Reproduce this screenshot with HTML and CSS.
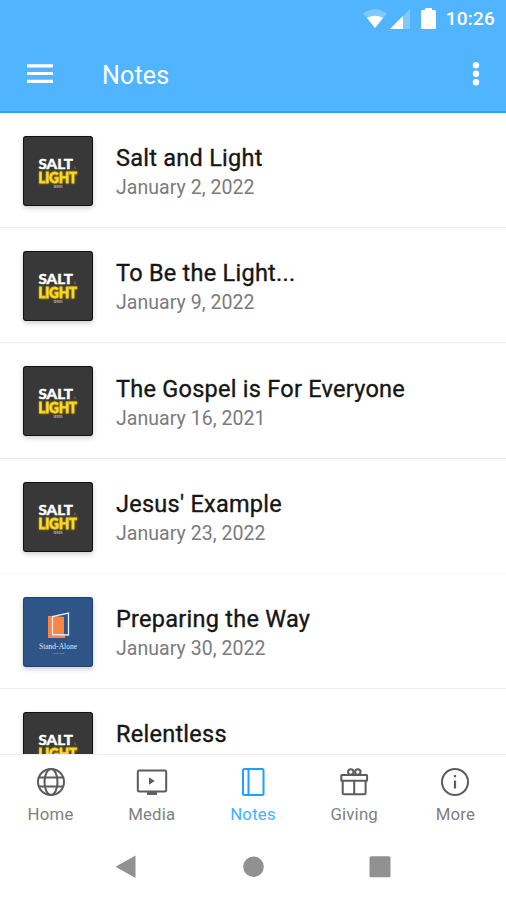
FILE: index.html
```
<!DOCTYPE html>
<html lang="en">
<head>
<meta charset="utf-8">
<title>Notes</title>
<link rel="stylesheet" href="styles.css">
</head>
<body>
<svg width="0" height="0" class="defs">
  <symbol id="salt" viewBox="0 0 70 70">
    <rect width="70" height="70" fill="#383838"/>
    <rect x=".5" y=".5" width="69" height="69" rx="2.500" fill="none" stroke="#111"/>
    <text class="art-salt" x="15.500" y="32.500" textLength="34.500" lengthAdjust="spacingAndGlyphs">SALT</text>
    <text class="art-amp" x="50.500" y="32.500">&amp;</text>
    <text class="art-light" x="15.500" y="46.500" textLength="38.500" lengthAdjust="spacingAndGlyphs">LIGHT</text>
    <text class="art-series" x="35" y="51.500">SERIES</text>
  </symbol>
  <symbol id="stand" viewBox="0 0 70 70">
    <rect width="70" height="70" fill="#2f5487"/>
    <rect x=".5" y=".5" width="69" height="69" rx="2.500" fill="none" stroke="#1d427a"/>
    <path d="M25 19h6l11 1v21H25z" fill="#fa8643"/>
    <path d="M41 18.500 45.500 17v20.500H41z" fill="#2f5487"/>
    <path d="M29.500 37.500V19.500l16-3.500v22z" fill="none" stroke="#e4edf7" stroke-width="1.300"/>
    <text class="art-stand" x="35" y="52" textLength="38" lengthAdjust="spacingAndGlyphs">Stand-Alone</text>
    <text class="art-msg" x="35" y="56.500">MESSAGES</text>
  </symbol>
</svg>
<header class="header">
  <div class="status">
    <svg class="wifi" viewBox="0 0 26 20"><path d="M1 4.500Q13-4 25 4.500L13 19z" fill="#fff" opacity=".28"/><path d="M5 9Q13 4.500 21 9L13 19z" fill="#fff"/></svg>
    <svg class="signal" viewBox="0 0 20 20"><path d="M20 0v20H0z" fill="#fff" opacity=".28"/><path d="M13 7v13H0z" fill="#fff"/></svg>
    <svg class="battery" viewBox="0 0 15 21"><path d="M4 0h7v2h2.500q1.500 0 1.500 1.500v16q0 1.500-1.500 1.500h-12Q0 21 0 19.500v-16Q0 2 1.500 2H4z" fill="#fff"/></svg>
    <span class="time">10:26</span>
  </div>
  <div class="bar">
    <svg class="burger" viewBox="0 0 26 20"><path d="M0 1.800h26M0 9.500h26M0 17.300h26" stroke="#fff" stroke-width="3.200"/></svg>
    <h1>Notes</h1>
    <svg class="dots" viewBox="0 0 8 24"><circle cx="4" cy="3.300" r="3.200"/><circle cx="4" cy="11.800" r="3.200"/><circle cx="4" cy="20.300" r="3.200"/></svg>
  </div>
</header>
<main class="list">
  <article class="row"><svg class="thumb"><use href="#salt"/></svg><div><h2>Salt and Light</h2><p>January 2, 2022</p></div></article>
  <article class="row"><svg class="thumb"><use href="#salt"/></svg><div><h2>To Be the Light...</h2><p>January 9, 2022</p></div></article>
  <article class="row"><svg class="thumb"><use href="#salt"/></svg><div><h2>The Gospel is For Everyone</h2><p>January 16, 2021</p></div></article>
  <article class="row faint"><svg class="thumb"><use href="#salt"/></svg><div><h2>Jesus' Example</h2><p>January 23, 2022</p></div></article>
  <article class="row"><svg class="thumb"><use href="#stand"/></svg><div><h2>Preparing the Way</h2><p>January 30, 2022</p></div></article>
  <article class="row"><svg class="thumb"><use href="#salt"/></svg><div><h2>Relentless</h2></div></article>
</main>
<nav class="tabs">
  <a class="tab"><svg viewBox="0 0 32 32"><circle cx="16" cy="16" r="13"/><ellipse cx="16" cy="16" rx="6.500" ry="13"/><path d="M4 11.500h24M4 20.500h24"/></svg><span>Home</span></a>
  <a class="tab"><svg viewBox="0 0 32 32"><rect x="1.800" y="4.500" width="28.400" height="21" rx="1.500"/><path d="M11 27.500h10" stroke-width="2.800"/><path class="solid" d="M13 11.300v7.400l5.700-3.700z"/></svg><span>Media</span></a>
  <a class="tab active"><svg viewBox="0 0 32 32"><rect x="6" y="3" width="20.500" height="26" rx="1.500"/><path d="M11.500 3v26"/></svg><span>Notes</span></a>
  <a class="tab"><svg viewBox="0 0 32 32"><rect x="3.300" y="9" width="25.800" height="5.700" rx=".5"/><path d="M4.700 14.500v12.500q0 1.200 1.200 1.200h20.500q1.200 0 1.200-1.200V14.500M16.200 14.500v13.500"/><circle cx="12.800" cy="6" r="2.700"/><circle cx="19.800" cy="6" r="2.700"/></svg><span>Giving</span></a>
  <a class="tab"><svg viewBox="0 0 32 32"><circle cx="16" cy="16" r="13"/><path d="M16 14.500v8M16 9v2.300" stroke-width="2.200"/></svg><span>More</span></a>
</nav>
<footer class="system">
  <svg viewBox="0 0 24 24"><path d="M1.500 11.700 21.500 .5v22.500z"/></svg>
  <svg viewBox="0 0 24 24"><circle cx="12.500" cy="11.700" r="10.300"/></svg>
  <svg viewBox="0 0 24 24"><rect x="1.500" y="1.300" width="21" height="21" rx="1.500"/></svg>
</footer>
</body>
</html>
```
FILE: styles.css
```
* { box-sizing: border-box; margin: 0; padding: 0; }
body {
  width: 506px;
  height: 900px;
  overflow: hidden;
  display: flex;
  flex-direction: column;
  background: #fff;
  font-family: Roboto, "Liberation Sans", sans-serif;
}
svg { display: block; flex: none; }
.defs { display: none; }
.header {
  height: 113px;
  flex: none;
  background: #50b4ff;
  border-bottom: 2px solid #29a5f6;
  color: #fff;
}
.status {
  height: 37px;
  display: flex;
  align-items: center;
  justify-content: flex-end;
  padding-right: 11px;
}
.wifi { width: 26px; height: 20px; margin-right: 2px; }
.signal { width: 20px; height: 20px; margin-right: 11px; }
.battery { width: 15px; height: 21px; margin-right: 10px; }
.time { font-size: 19px; font-weight: 500; letter-spacing: 0.2px; line-height: 37px; }
.bar {
  height: 74px;
  display: flex;
  align-items: center;
  padding: 0 26px 0 27px;
}
.burger { width: 26px; height: 20px; }
.bar h1 { margin-left: 49px; flex: 1; font-size: 25px; font-weight: 400; letter-spacing: 0.2px; line-height: 30px; padding-top: 3px; }
.dots { width: 8px; height: 24px; fill: #fff; }
.list { height: 641px; flex: none; overflow: hidden; }
.row {
  height: 115.2px;
  display: flex;
  padding: 23px 23px 0;
  border-bottom: 1px solid #eaecee;
}
.row.faint { border-bottom-color: #f7f7f7; }
.thumb {
  width: 70px;
  height: 70px;
  margin-right: 23px;
  border-radius: 3px;
  box-shadow: 0 2px 5px rgba(0, 0, 0, 0.2);
}
.row h2 { font-size: 23.5px; font-weight: 400; -webkit-text-stroke: 0.35px #161616; letter-spacing: 0.26px; line-height: 30px; margin-top: 7.2px; color: #161616; white-space: nowrap; }
.row p { font-size: 19.5px; letter-spacing: 0.05px; line-height: 28px; margin-top: 1px; color: #7b7b7b; white-space: nowrap; }
.art-salt { font: 900 14px Lato, sans-serif; fill: #fff; stroke: #fff; stroke-width: 0.4px; }
.art-amp { font: 400 4px Lato, sans-serif; fill: #777; }
.art-light { font: 900 14.5px Lato, sans-serif; fill: #ffe03a; stroke: #f2cc1c; stroke-width: 0.9px; filter: drop-shadow(0 0 1px #a88a00); }
.art-series { font: 700 2.8px Lato, sans-serif; fill: #bbb; text-anchor: middle; }
.art-stand { font: 400 8px "Liberation Serif", serif; fill: #dce8f5; text-anchor: middle; }
.art-msg { font: 400 2.5px Lato, sans-serif; fill: #8ea9cc; text-anchor: middle; }
.tabs {
  height: 80px;
  flex: none;
  display: grid;
  grid-template-columns: repeat(5, 1fr);
  border-top: 1px solid #eee;
  padding-top: 11px;
}
.tab { display: flex; flex-direction: column; align-items: center; color: #5c5c5c; }
.tab svg { width: 32px; height: 32px; fill: none; stroke: currentColor; stroke-width: 2; }
.tab .solid { fill: currentColor; stroke: none; }
.tab span { font-size: 16.8px; line-height: 22px; margin-top: 5px; letter-spacing: 0.2px; color: #808080; }
.tab.active { color: #1ea2f8; }
.tab.active span { color: #46b2fa; }
.system {
  height: 66px;
  flex: none;
  display: flex;
  justify-content: space-between;
  padding: 21px 114px 0;
}
.system svg { width: 24px; height: 24px; fill: #919191; }
```
